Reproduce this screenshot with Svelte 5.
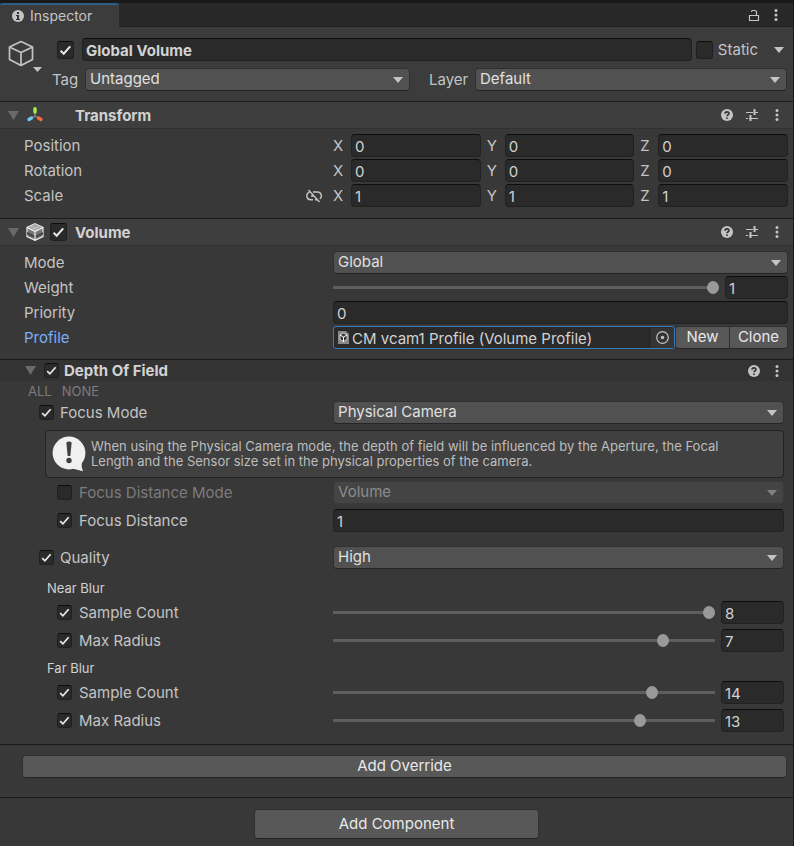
<script>
  const axes = ['X', 'Y', 'Z'];
  let transform = $state([
    { name: 'Position', values: ['0', '0', '0'] },
    { name: 'Rotation', values: ['0', '0', '0'] },
    { name: 'Scale', values: ['1', '1', '1'], link: true }
  ]);
  let weight = $state(1);
  let priority = $state('0');
  let focusDistance = $state('1');
  let objectName = $state('Global Volume');
  let blurs = $state([
    {
      title: 'Near Blur',
      rows: [
        { name: 'Sample Count', value: 8, min: 3, max: 8 },
        { name: 'Max Radius', value: 7, min: 0, max: 8 }
      ]
    },
    {
      title: 'Far Blur',
      rows: [
        { name: 'Sample Count', value: 14, min: 3, max: 16 },
        { name: 'Max Radius', value: 13, min: 0, max: 16 }
      ]
    }
  ]);
</script>

{#snippet check(id, label, checked, small)}
  <span class="check" class:small>
    <input type="checkbox" {id} {checked} aria-label={label} />
    <svg viewBox="0 0 17 17" aria-hidden="true"><path d="M3.6 9.2 6.7 12.2 13.2 4.8" /></svg>
  </span>
{/snippet}

{#snippet dropdown(id, label, value, disabled)}
  <span class="dropdown" class:disabled>
    <select {id} aria-label={label} {disabled}><option>{value}</option></select>
  </span>
{/snippet}

{#snippet help()}
  <button class="icon" aria-label="Help">
    <svg width="12" height="12" viewBox="0 0 12 12"><circle cx="6" cy="6" r="6" fill="#c4c4c4" /><path d="M4 4.7C4 2.3 8 2.3 8 4.5 8 5.8 6 5.7 6 7.3M6 8.4v1.5" fill="none" stroke="#333" stroke-width="1.6" /></svg>
  </button>
{/snippet}

{#snippet presets()}
  <button class="icon" aria-label="Presets">
    <svg width="12" height="12" viewBox="0 0 12 12"><path d="M0 3.5h7M10 3.5h2M0 9.5h2M5 9.5h7" stroke="#c4c4c4" /><path d="M8.5 0v6M4.5 6v6" stroke="#c4c4c4" stroke-width="2" /><path d="M9 3.5h2M3 9.5h1" stroke="#c4c4c4" /></svg>
  </button>
{/snippet}

{#snippet more()}
  <button class="icon dots" aria-label="More options">
    <svg width="4" height="12" viewBox="0 0 4 12"><circle cx="2" cy="1.5" r="1.5" fill="#c4c4c4" /><circle cx="2" cy="6" r="1.5" fill="#c4c4c4" /><circle cx="2" cy="10.5" r="1.5" fill="#c4c4c4" /></svg>
  </button>
{/snippet}

{#snippet fold()}
  <button class="icon" aria-label="Collapse">
    <svg width="11" height="9" viewBox="0 0 11 9"><path d="M0 0h11L5.5 9z" fill="#6a6a6a" /></svg>
  </button>
{/snippet}

<div class="inspector">
  <nav class="tabs">
    <button class="tab">
      <svg width="12" height="12" viewBox="0 0 12 12"><circle cx="6" cy="6" r="6" fill="#c4c4c4" /><path d="M5 2h2v2H5zM4 5h3v4h1v1H4V9h1V6H4z" fill="#333" /></svg>
      Inspector
    </button>
    <span class="tools">
      <button class="icon" aria-label="Lock">
        <svg width="12" height="13" viewBox="0 0 12 13"><path d="M1.5 6.5h9v5h-9zM8.5 6V3.5Q8.5 1.5 6.500 1.5H5Q3.5 1.5 3.5 3" fill="none" stroke="#c4c4c4" stroke-width="1.2" /></svg>
      </button>
      {@render more()}
    </span>
  </nav>

  <header>
    <button class="icon cube" aria-label="Select icon">
      <svg width="34" height="34" viewBox="0 0 34 34">
        <path d="M13 1.5 24.500 7v12.5L13 25.500 1.500 19.500V7zM1.500 7 13 12.500 24.500 7M13 12.500v13" fill="none" stroke="#c4c4c4" stroke-width="1.7" stroke-linejoin="round" />
        <path d="M25 27h9l-4.500 5z" fill="#c4c4c4" />
      </svg>
    </button>
    <div class="identity">
      <div class="name-row">
        {@render check('active', 'Active', true, false)}
        <input class="field name" type="text" aria-label="Name" bind:value={objectName} />
        {@render check('static', 'Static', false, false)}
        <label for="static">Static</label>
        <button class="icon" aria-label="Static options">
          <svg width="10" height="6" viewBox="0 0 10 6"><path d="M0 0h10L5 6z" fill="#c4c4c4" /></svg>
        </button>
      </div>
      <div class="tag-row">
        <label for="tag">Tag</label>
        {@render dropdown('tag', 'Tag', 'Untagged', false)}
        <label for="layer" class="layer">Layer</label>
        {@render dropdown('layer', 'Layer', 'Default', false)}
      </div>
    </div>
  </header>

  <section>
    <div class="bar">
      {@render fold()}
      <svg class="glyph" width="18" height="18" viewBox="0 0 18 18" fill="none" stroke-width="3.4" stroke-linecap="round">
        <path d="M9 6.500v3.500M9 10l-3 1.700M9 10l3 1.700" stroke="#8a8a80" stroke-width="1.2" />
        <path d="M9 2.700v3.300" stroke="#a4f04a" /><path d="M5.500 12 3 13.500" stroke="#6fc8f2" /><path d="M12.500 12 15 13.500" stroke="#fb6a3e" />
      </svg>
      <h2 class="spaced">Transform</h2>
      <span class="tools">{@render help()}{@render presets()}{@render more()}</span>
    </div>
    <div class="rows">
      {#each transform as row}
        <div class="row">
          <span class="label">
            {row.name}
            {#if row.link}
              <button class="icon link" aria-label="Constrain proportions">
                <svg width="16" height="14" viewBox="0 0 16 14" fill="none" stroke="#c4c4c4" stroke-width="1.4">
                  <path d="M3.500 3.200A3.900 3.900 0 0 0 4.500 10.800H7M7 3h4.500a3.900 3.900 0 0 1 2.300 7M5 7h2.500M9 10.800h2M2.500 1l11 12" />
                </svg>
              </button>
            {/if}
          </span>
          <div class="value axes">
            {#each axes as axis, i}
              <label class="axis"><span>{axis}</span><input class="field" type="text" bind:value={row.values[i]} /></label>
            {/each}
          </div>
        </div>
      {/each}
    </div>
  </section>

  <section>
    <div class="bar">
      {@render fold()}
      <svg class="glyph" width="18" height="18" viewBox="0 0 18 18">
        <path d="M9 .7 17 4.500v9L9 17.300 1 13.500v-9z" fill="#777" stroke="#eee" stroke-width="1.2" />
        <path d="M9 1 16.500 4.500 9 8.300 1.500 4.500z" fill="#aaa" />
        <path d="M1 9 9 13 17 9V11.500L9 15 1 11.500z" fill="#444" />
        <path d="M1 4.500 9 8.500 17 4.500M9 8.500v9" fill="none" stroke="#eee" stroke-width="1.2" />
        <path d="M4.500 3l8 4M13.500 3l-8 4" stroke="#ccc" stroke-width=".6" />
      </svg>
      {@render check('volume', 'Volume enabled', true, false)}
      <h2>Volume</h2>
      <span class="tools">{@render help()}{@render presets()}{@render more()}</span>
    </div>
    <div class="rows">
      <div class="row">
        <label class="label" for="mode">Mode</label>
        <div class="value">{@render dropdown('mode', 'Mode', 'Global', false)}</div>
      </div>
      <div class="row">
        <label class="label" for="weight">Weight</label>
        <div class="value slide">
          <input type="range" id="weight" min="0" max="1" step="0.01" bind:value={weight} />
          <input class="field number" type="text" aria-label="Weight value" bind:value={weight} />
        </div>
      </div>
      <div class="row">
        <label class="label" for="priority">Priority</label>
        <div class="value"><input class="field" id="priority" type="text" bind:value={priority} /></div>
      </div>
      <div class="row">
        <span class="label active">Profile</span>
        <div class="value">
          <div class="object">
            <svg width="11" height="13" viewBox="0 0 11 13"><path d="M0 0h8l3 3v10H0z" fill="#888" /><path d="M5.500 2 9 4v4.500L5.500 10.500 2 8.500V4z" fill="#333" stroke="#eee" stroke-width=".8" /><path d="M2 4 5.500 6 9 4M5.500 6v5" stroke="#fff" fill="none" /></svg>
            <span>CM vcam1 Profile (Volume Profile)</span>
            <button class="icon picker" aria-label="Pick profile">
              <svg width="13" height="13" viewBox="0 0 13 13"><circle cx="6.500" cy="6.500" r="5.800" fill="none" stroke="#c4c4c4" stroke-width="1.2" /><circle cx="6.500" cy="6.500" r="1.700" fill="#c4c4c4" /></svg>
            </button>
          </div>
          <button class="btn new">New</button>
          <button class="btn clone">Clone</button>
        </div>
      </div>
    </div>
  </section>

  <section class="override">
    <div class="subbar">
      {@render fold()}
      {@render check('dof', 'Depth Of Field enabled', true, true)}
      <h3>Depth Of Field</h3>
      <span class="tools">{@render help()}{@render more()}</span>
    </div>
    <div class="toggles"><button>ALL</button><button>NONE</button></div>
    <div class="row">
      <span class="label outer">
        {@render check('fm-on', 'Override focus mode', true, true)}
        <label for="fm">Focus Mode</label>
      </span>
      <div class="value">{@render dropdown('fm', 'Focus Mode', 'Physical Camera', false)}</div>
    </div>
    <div class="note">
      <svg width="34" height="36" viewBox="0 0 34 36"><circle cx="17" cy="17" r="16.400" fill="#f0f0f0" /><path d="M20 32.500Q25 33.500 31 35.300 29 31 29.700 26z" fill="#f0f0f0" /><path d="M14.300 6.500q2.700-2 5.400 0L18.300 20h-2.600z" fill="#404040" /><circle cx="17" cy="24.500" r="2.700" fill="#404040" /></svg>
      <p>When using the Physical Camera mode, the depth of field will be influenced by the Aperture, the Focal Length and the Sensor size set in the physical properties of the camera.</p>
    </div>
    <div class="stack">
      <div class="row dim">
        <span class="label inner">
          {@render check('fdm-on', 'Override focus distance mode', false, true)}
          <label for="fdm">Focus Distance Mode</label>
        </span>
        <div class="value">{@render dropdown('fdm', 'Focus Distance Mode', 'Volume', true)}</div>
      </div>
      <div class="row">
        <span class="label inner">
          {@render check('fd-on', 'Override focus distance', true, true)}
          <label for="fd">Focus Distance</label>
        </span>
        <div class="value"><input class="field" id="fd" type="text" bind:value={focusDistance} /></div>
      </div>
    </div>
    <div class="row quality">
      <span class="label outer">
        {@render check('q-on', 'Override quality', true, true)}
        <label for="quality">Quality</label>
      </span>
      <div class="value">{@render dropdown('quality', 'Quality', 'High', false)}</div>
    </div>
    {#each blurs as blur, b}
      <h4>{blur.title}</h4>
      <div class="stack">
        {#each blur.rows as row, r}
          <div class="row">
            <span class="label inner">
              {@render check(`blur-on-${b}-${r}`, `Override ${row.name}`, true, true)}
              <label for={`blur-${b}-${r}`}>{row.name}</label>
            </span>
            <div class="value slide">
              <input type="range" id={`blur-${b}-${r}`} min={row.min} max={row.max} bind:value={row.value} />
              <input class="field number" type="text" aria-label={`${blur.title} ${row.name} value`} bind:value={row.value} />
            </div>
          </div>
        {/each}
      </div>
    {/each}
  </section>

  <div class="add-override"><button class="btn">Add Override</button></div>
  <footer><button class="btn">Add Component</button></footer>
</div>

<style>
  :global(body) {
    margin: 0;
    background: #383838;
  }
  .inspector {
    box-sizing: border-box;
    min-height: 100vh;
    border-top: 3px solid #191919;
    border-right: 1px solid #191919;
    background: #383838;
    color: #c4c4c4;
    font: 15px/20px Inter, sans-serif;
  }
  input, select, button {
    box-sizing: border-box;
    margin: 0;
    font: inherit;
    color: inherit;
  }
  h2, h3, h4, p {
    margin: 0;
    font-size: 15px;
  }
  h2, h3 {
    font-weight: 700;
    color: #d2d2d2;
  }
  svg {
    display: block;
    flex: none;
  }
  .icon {
    display: flex;
    justify-content: center;
    align-items: center;
    padding: 0;
    border: 0;
    background: none;
  }
  .tools {
    display: flex;
    align-items: center;
    gap: 13px;
    margin-left: auto;
    padding-right: 14px;
  }
  .dots {
    width: 4px;
    margin-left: 4px;
  }
  .tabs {
    display: flex;
    height: 24px;
    box-sizing: border-box;
    background: #282828;
    box-shadow: inset 0 -1px #202020;
  }
  .tabs .tools {
    gap: 10px;
    padding-right: 15px;
  }
  .tab {
    display: flex;
    align-items: center;
    gap: 6px;
    width: 119px;
    padding: 0 0 0 12px;
    border: 0;
    border-top: 2px solid #2c5d87;
    border-radius: 3px 3px 0 0;
    background: #3c3c3c;
    font-size: 14px;
  }
  header {
    display: flex;
    gap: 10px;
    padding: 11px 6px 10px 8px;
    background: #3c3c3c;
  }
  .cube {
    width: 34px;
    height: 38px;
  }
  .identity {
    flex: 1;
    display: grid;
    gap: 7px;
  }
  .name-row {
    display: flex;
    align-items: center;
    padding-left: 5px;
  }
  .name-row .icon {
    margin: 0 3px 0 16px;
  }
  .name-row label {
    margin-left: 5px;
  }
  .tag-row {
    display: grid;
    grid-template-columns: 33px 25fr 65px 24fr;
    align-items: center;
  }
  .layer {
    padding-left: 19px;
  }
  .check {
    display: grid;
    flex: none;
    width: 17px;
    height: 18px;
  }
  .check > * {
    grid-area: 1 / 1;
    width: 100%;
    height: 100%;
  }
  .check input {
    appearance: none;
    border: 1px solid #202020;
    border-top-color: #0d0d0d;
    border-radius: 3px;
    background: #2a2a2a;
  }
  .check svg {
    visibility: hidden;
    pointer-events: none;
    fill: none;
    stroke: #e8e8e8;
    stroke-width: 2;
  }
  .check input:checked + svg {
    visibility: visible;
  }
  .small {
    width: 15px;
    height: 15px;
  }
  .field {
    width: 100%;
    height: 23px;
    padding: 1px 3px 0;
    border: 1px solid #212121;
    border-top-color: #0d0d0d;
    border-radius: 4px;
    background: #2a2a2a;
    color: #d2d2d2;
    outline: none;
  }
  .name {
    flex: 1;
    min-width: 0;
    margin: 0 4px 0 8px;
    font-weight: 700;
  }
  .dropdown {
    position: relative;
    display: block;
    width: 100%;
  }
  .dropdown::after {
    content: '';
    position: absolute;
    right: 7px;
    top: 9px;
    border: 5px solid transparent;
    border-top: 6px solid #c4c4c4;
    border-bottom: 0;
    pointer-events: none;
  }
  .dropdown select {
    display: block;
    appearance: none;
    width: 100%;
    height: 23px;
    padding: 0 20px 1px 4px;
    border: 1px solid #303030;
    border-bottom-color: #242424;
    border-radius: 4px;
    background: #515151;
    color: #e0e0e0;
  }
  .dropdown.disabled select {
    border-color: #3a3a3a;
    background: #444;
    color: #8c8c8c;
    opacity: 1;
  }
  .dropdown.disabled::after {
    border-top-color: #808080;
  }
  section {
    border-top: 1px solid #1a1a1a;
  }
  .bar, .subbar {
    display: flex;
    align-items: center;
    box-sizing: border-box;
  }
  .bar {
    height: 27px;
    padding-left: 8px;
    border-bottom: 1px solid #303030;
    background: #3e3e3e;
  }
  .glyph {
    margin: 0 6px 0 7px;
  }
  .bar h2 {
    margin-left: 8px;
    padding-top: 2px;
  }
  .bar .spaced {
    margin-left: 25px;
  }
  .rows {
    display: grid;
    gap: 2px;
    padding: 5px 0 11px;
  }
  .row {
    display: grid;
    grid-template-columns: 42% 1fr;
    align-items: center;
    min-height: 23px;
  }
  .label {
    display: flex;
    align-items: center;
    padding-left: 24px;
  }
  .active {
    color: #7baefa;
  }
  .link {
    margin: 0 11px 0 auto;
  }
  .value {
    display: flex;
    padding-right: 5px;
    min-width: 0;
  }
  .axes {
    display: grid;
    grid-template-columns: repeat(3, 1fr);
    gap: 6px;
  }
  .axis {
    display: grid;
    grid-template-columns: 18px 1fr;
    align-items: center;
  }
  .slide {
    align-items: center;
    gap: 6px;
  }
  .slide .number {
    flex: none;
    width: 63px;
  }
  input[type='range'] {
    appearance: none;
    flex: 1;
    min-width: 0;
    height: 13px;
    background: linear-gradient(#5e5e5e, #5e5e5e) center / 100% 3px no-repeat;
  }
  input[type='range']::-webkit-slider-thumb {
    appearance: none;
    width: 12px;
    height: 13px;
    border-radius: 50%;
    background: #999;
  }
  .object {
    flex: 1;
    display: flex;
    align-items: center;
    box-sizing: border-box;
    height: 23px;
    min-width: 0;
    padding-left: 4px;
    border: 1px solid #3a79bb;
    border-radius: 3px;
    background: #2a2a2a;
  }
  .object span {
    flex: 1;
    min-width: 0;
    overflow: hidden;
    padding: 2px 0 0 3px;
    white-space: nowrap;
    color: #d2d2d2;
  }
  .picker {
    width: 23px;
    height: 20px;
    background: #353535;
  }
  .btn {
    height: 23px;
    padding: 0 0 1px;
    border: 1px solid #303030;
    border-bottom-color: #242424;
    border-radius: 4px;
    background: #585858;
    color: #e8e8e8;
  }
  .new {
    width: 55px;
    border-radius: 4px 0 0 4px;
  }
  .clone {
    width: 58px;
    border-left: 0;
    border-radius: 0 4px 4px 0;
  }
  section + .override {
    margin-top: -1px;
    padding-bottom: 12px;
  }
  .subbar {
    height: 21px;
    padding-left: 25px;
    background: #333;
  }
  .subbar .check {
    margin: 0 5px 0 8px;
  }
  .subbar .tools {
    gap: 11px;
  }
  .toggles {
    display: flex;
    gap: 10px;
    padding: 0 28px;
  }
  .toggles button {
    padding: 0;
    border: 0;
    background: none;
    color: #7c7c7c;
    font-size: 13px;
    line-height: 20px;
  }
  .override .value {
    padding-right: 9px;
  }
  .label .check {
    margin-right: 6px;
  }
  .outer {
    padding-left: 39px;
  }
  .inner {
    padding-left: 57px;
  }
  .inner .check {
    margin-right: 7px;
  }
  .dim label {
    color: #7c7c7c;
  }
  .note {
    display: flex;
    align-items: center;
    gap: 5px;
    box-sizing: border-box;
    min-height: 48px;
    margin: 6px 9px 3px 45px;
    padding: 0 30px 0 6px;
    border: 1px solid #232323;
    border-radius: 4px;
    background: #404040;
  }
  .note p {
    font-size: 13px;
    line-height: 15px;
    color: #bdbdbd;
  }
  .stack {
    display: grid;
    gap: 5px;
  }
  .quality {
    margin: 14px 0 9px;
  }
  h4 {
    padding: 0 47px 3px;
    font-size: 13px;
    font-weight: 400;
    color: #d2d2d2;
  }
  .stack + h4 {
    padding-top: 6px;
  }
  .add-override {
    padding: 10px 6px 19px 22px;
    border-top: 1px solid #1a1a1a;
  }
  .add-override .btn {
    width: 100%;
  }
  footer {
    display: flex;
    justify-content: center;
    padding: 11px 0 8px;
    border-top: 1px solid #1a1a1a;
  }
  footer .btn {
    width: 36%;
    min-width: 140px;
    height: 30px;
  }
</style>
